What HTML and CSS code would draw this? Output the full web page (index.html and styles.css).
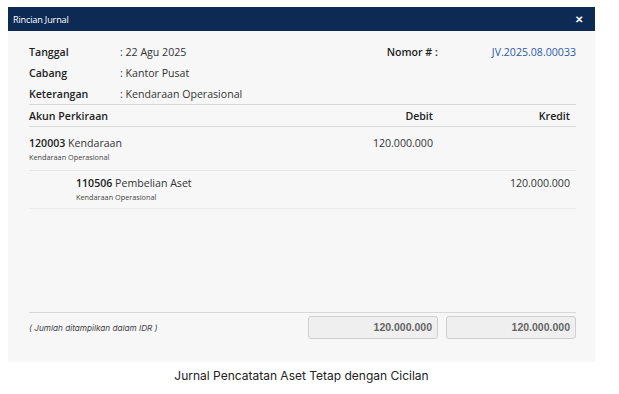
FILE: index.html
```html
<!DOCTYPE html>
<html>
<head>
<meta charset="utf-8">
<link rel="stylesheet" href="styles.css">
</head>
<body>
<div class="wrap">
  <div class="modal">
    <div class="modal-head">
      <span class="modal-title">Rincian Jurnal</span>
      <span class="close">&#x2715;</span>
    </div>
    <div class="modal-body">
      <div class="info">
        <div class="info-left">
          <div class="info-row"><span class="lbl">Tanggal</span><span class="val">: 22 Agu 2025</span></div>
          <div class="info-row"><span class="lbl">Cabang</span><span class="val">: Kantor Pusat</span></div>
          <div class="info-row"><span class="lbl">Keterangan</span><span class="val">: Kendaraan Operasional</span></div>
        </div>
        <div class="info-right">
          <span class="lbl">Nomor # :</span>
          <span class="nomor">JV.2025.08.00033</span>
        </div>
      </div>
      <div class="table">
        <div class="thead">
          <div class="th">Akun Perkiraan</div>
          <div class="th num">Debit</div>
          <div class="th num">Kredit</div>
        </div>
        <div class="tr first">
          <div class="acc">
            <div class="acc-main"><b>120003</b> Kendaraan</div>
            <div class="acc-sub">Kendaraan Operasional</div>
          </div>
          <div class="num amt">120.000.000</div>
          <div class="num amt"></div>
        </div>
        <div class="tr second">
          <div class="acc indent">
            <div class="acc-main"><b>110506</b> Pembelian Aset</div>
            <div class="acc-sub">Kendaraan Operasional</div>
          </div>
          <div class="num amt"></div>
          <div class="num amt">120.000.000</div>
        </div>
      </div>
      <div class="spacer"></div>
      <div class="foot">
        <div class="note">( Jumlah ditampilkan dalam IDR )</div>
        <div class="total">120.000.000</div>
        <div class="total">120.000.000</div>
      </div>
    </div>
  </div>
  <div class="caption">Jurnal Pencatatan Aset Tetap dengan Cicilan</div>
</div>
</body>
</html>
```

FILE: styles.css
```css
* { box-sizing: border-box; }
html, body { margin: 0; padding: 0; background: #ffffff; }
body { font-family: "Open Sans", "Noto Sans", sans-serif; color: #222; }

.wrap { width: 587px; margin: 7px 0 0 8px; }

.modal { display: flex; flex-direction: column; }

.modal-head {
  height: 24px;
  background: #0d2a55;
  color: #fff;
  display: flex;
  align-items: center;
  justify-content: space-between;
  padding: 0 12px 0 5px;
}
.modal-title { font-size: 9.2px; letter-spacing: -0.2px; }
.close { font-size: 10px; font-weight: 700; }

.modal-body {
  background: #f7f7f7;
  padding: 10px 19px 23px 21px;
  display: flex;
  flex-direction: column;
  height: 331px;
}

.info { display: flex; justify-content: space-between; border-bottom: 1px solid #d8d8d8; }
.info-row { display: flex; height: 21px; align-items: center; font-size: 10.6px; }
.lbl { font-weight: 600; color: #222; }
.info-row .lbl { width: 91px; }
.val { color: #333; }
.info-right { display: flex; height: 21px; align-items: center; font-size: 10.6px; }
.info-right .lbl { margin-right: 54px; }
.nomor { color: #2c5aa8; }

.table { font-size: 10.6px; }
.thead, .tr { display: grid; grid-template-columns: 1fr 137px 137px; }
.thead { height: 22px; align-items: center; border-bottom: 1px solid #d8d8d8; }
.th { font-weight: 600; }
.num { text-align: right; padding-right: 6px; }

.tr.first { padding: 8px 0 7px; border-bottom: 1px solid #e6e6e6; }
.tr.second { padding: 4px 0 5px; border-bottom: 1px solid #ececec; }
.acc-main { line-height: 16px; color: #333; }
.acc-main b { font-weight: 600; color: #222; }
.acc-sub { font-size: 7.3px; line-height: 12px; color: #444; }
.indent { padding-left: 47px; }
.amt { line-height: 16px; color: #333; }

.spacer { flex: 1; }

.foot {
  display: grid;
  grid-template-columns: 1fr 130px 130px;
  column-gap: 8px;
  border-top: 1px solid #d8d8d8;
  padding-top: 3px;
}
.note { font-size: 8.2px; font-style: italic; color: #444; align-self: center; font-family: "Inter", sans-serif; }
.total {
  height: 23px;
  background: #efefef;
  border: 1px solid #cfcfcf;
  border-radius: 3px;
  text-align: right;
  padding-right: 5px;
  font-family: "Liberation Sans", Arial, sans-serif;
  font-size: 10.5px;
  font-weight: 700;
  color: #666;
  line-height: 21px;
}

.caption {
  text-align: center;
  margin-top: 7px;
  font-family: "Inter", sans-serif;
  font-size: 12px;
  line-height: 14px;
  color: #222;
}
```
